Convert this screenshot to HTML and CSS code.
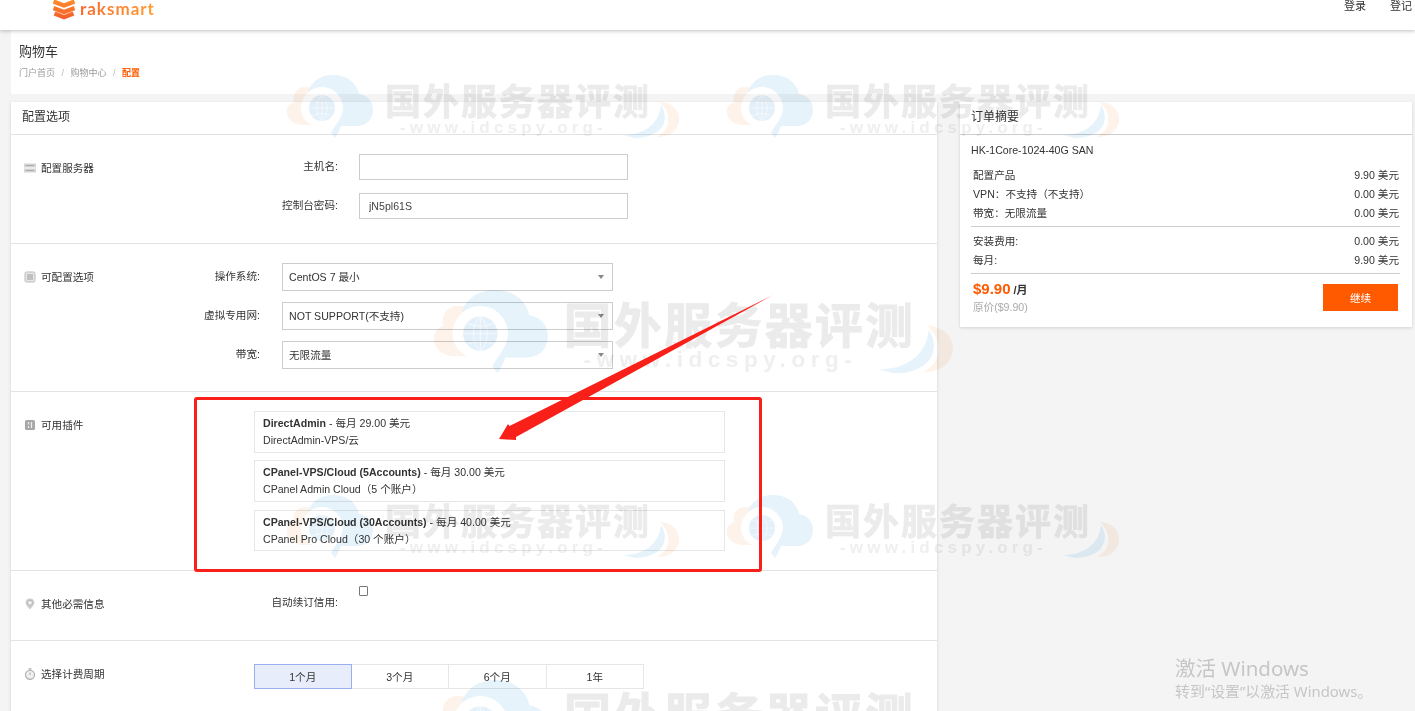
FILE: index.html
```html
<!DOCTYPE html>
<html>
<head>
  <title>购物车 - 配置</title>
  <link rel="stylesheet" href="styles.css">
</head>
<body>
  <svg class="defs" width="0" height="0">
    <symbol id="wm-art" viewBox="0 0 400 65" overflow="visible">
      <path class="wm-orange" d="M20 12C11 12 7 20 9 27C3 29 1 34 2 38C3 46 10 50 18 50H44L34 14C30 13 25 12 20 12Z"/>
      <path class="wm-blue" d="M50 63C53 58 55 54 56 51H72C82 51 88 44 88 35C88 26 82 20 74 19C72 8 62 0 48 0C36 0 27 6 23 16C30 30 40 50 50 63Z"/>
      <path class="wm-white" d="M37 12C25 12 16 22 16 33C16 41 21 47 27 50L46 58C50 50 58 42 58 33C58 22 49 12 37 12Z"/>
      <circle class="wm-globe" cx="37" cy="33" r="13"/>
      <path class="wm-grid" d="M24 33H50M37 20V46M27 25C33 28 41 28 47 25M27 41C33 38 41 38 47 41M37 20C30 26 30 40 37 46M37 20C44 26 44 40 37 46"/>
      <path class="wm-orange" d="M375 27C392 28 398 42 392 52C388 60 380 62 372 62C385 55 388 40 375 27Z"/>
      <path class="wm-blue" d="M338 60C358 60 374 50 376 30C386 46 376 63 350 63Z"/>
    </symbol>
    <symbol id="ic-server" viewBox="0 0 12 12">
      <path d="M0 1.5h12v4H0zM0 6.5h12v4H0z" fill="#d4d4d4"/>
      <path d="M2 3.5h8M2 8.5h8" stroke="#aaa" stroke-width="1"/>
    </symbol>
    <symbol id="ic-list" viewBox="0 0 12 12">
      <rect x="1" y="1" width="10" height="10" rx="1.5" fill="#e6e6e6" stroke="#bbb"/>
      <path d="M3 4h6M3 6h6M3 8h6" stroke="#999" stroke-width="1"/>
    </symbol>
    <symbol id="ic-plugin" viewBox="0 0 12 12">
      <rect x="1" y="1" width="10" height="10" rx="1.5" fill="#a8a8a8"/>
      <path d="M4.5 3v2.5M7.5 3v6M4.5 7v2" stroke="#eee" stroke-width="1.2"/>
    </symbol>
    <symbol id="ic-pin" viewBox="0 0 12 12">
      <path d="M6 0.5C3.2 0.5 1.6 2.5 1.6 4.8C1.6 7.4 4.5 9.5 6 11.5C7.5 9.5 10.4 7.4 10.4 4.8C10.4 2.5 8.8 0.5 6 0.5Z" fill="#ccc"/>
      <circle cx="6" cy="4.8" r="2.4" fill="#eee" stroke="#aaa" stroke-width="0.7"/>
    </symbol>
    <symbol id="ic-clock" viewBox="0 0 12 12">
      <circle cx="6" cy="6.8" r="4.5" fill="#f0f0f0" stroke="#b4b4b4" stroke-width="1.3"/>
      <path d="M4.5 0.8h3M6 0.8v1.5M6 4.5v2.5" stroke="#b4b4b4" stroke-width="1.2"/>
    </symbol>
    <linearGradient id="logo-grad" x1="0" y1="0" x2="0" y2="1">
      <stop offset="0" stop-color="#ff8a2c"/>
      <stop offset="1" stop-color="#f4602a"/>
    </linearGradient>
  </svg>

  <header class="topbar">
    <a class="logo">
      <svg class="logo-mark" viewBox="0 0 22 21" width="22" height="21">
        <path d="M0.5 2.5L11 6.5L21.5 2.5M0.5 9L11 13L21.5 9M1.5 14.5L11 18.2L20.5 14.5" fill="none" stroke="url(#logo-grad)" stroke-width="4.4"/>
      </svg>
      <span class="logo-text">raksmart</span>
    </a>
    <nav class="topnav">
      <a>登录</a>
      <a>登记</a>
    </nav>
  </header>

  <div class="page-head">
    <h1>购物车</h1>
    <div class="crumbs">
      <a>门户首页</a><i>/</i><a>购物中心</a><i>/</i><b>配置</b>
    </div>
  </div>

  <main class="content">
    <section class="card options">
      <h2 class="card-title">配置选项</h2>

      <div class="section sec-server">
        <div class="sec-title"><svg class="ic"><use href="#ic-server"/></svg>配置服务器</div>
        <div class="sec-body form-wide">
          <div class="form-row">
            <label class="form-label">主机名:</label>
            <input class="text-input" type="text">
          </div>
          <div class="form-row">
            <label class="form-label">控制台密码:</label>
            <input class="text-input" type="text" value="jN5pl61S">
          </div>
        </div>
      </div>

      <div class="section sec-config">
        <div class="sec-title"><svg class="ic"><use href="#ic-list"/></svg>可配置选项</div>
        <div class="sec-body form-narrow">
          <div class="form-row">
            <label class="form-label">操作系统:</label>
            <div class="select">CentOS 7 最小</div>
          </div>
          <div class="form-row">
            <label class="form-label">虚拟专用网:</label>
            <div class="select">NOT SUPPORT(不支持)</div>
          </div>
          <div class="form-row">
            <label class="form-label">带宽:</label>
            <div class="select">无限流量</div>
          </div>
        </div>
      </div>

      <div class="section sec-addons">
        <div class="sec-title"><svg class="ic"><use href="#ic-plugin"/></svg>可用插件</div>
        <div class="sec-body addons">
          <div class="addon"><div><b>DirectAdmin</b> - 每月 29.00 美元</div><div>DirectAdmin-VPS/云</div></div>
          <div class="addon"><div><b>CPanel-VPS/Cloud (5Accounts)</b> - 每月 30.00 美元</div><div>CPanel Admin Cloud（5 个账户）</div></div>
          <div class="addon addon-last"><div><b>CPanel-VPS/Cloud (30Accounts)</b> - 每月 40.00 美元</div><div>CPanel Pro Cloud（30 个账户）</div></div>
        </div>
      </div>

      <div class="section sec-other">
        <div class="sec-title"><svg class="ic"><use href="#ic-pin"/></svg>其他必需信息</div>
        <div class="sec-body form-wide">
          <div class="form-row form-check">
            <label class="form-label">自动续订信用:</label>
            <input class="check" type="checkbox">
          </div>
        </div>
      </div>

      <div class="section sec-cycle">
        <div class="sec-title"><svg class="ic"><use href="#ic-clock"/></svg>选择计费周期</div>
        <div class="sec-body tabs">
          <a class="tab active">1个月</a>
          <a class="tab">3个月</a>
          <a class="tab">6个月</a>
          <a class="tab">1年</a>
        </div>
      </div>
    </section>

    <aside class="card summary">
      <h2 class="card-title">订单摘要</h2>
      <div class="summary-body">
        <div class="product">HK-1Core-1024-40G SAN</div>
        <div class="rows">
          <div class="row"><span>配置产品</span><span>9.90 美元</span></div>
          <div class="row"><span>VPN：不支持（不支持）</span><span>0.00 美元</span></div>
          <div class="row"><span>带宽：无限流量</span><span>0.00 美元</span></div>
        </div>
        <div class="rows">
          <div class="row"><span>安装费用:</span><span>0.00 美元</span></div>
          <div class="row"><span>每月:</span><span>9.90 美元</span></div>
        </div>
        <div class="total">
          <div>
            <div><span class="price">$9.90</span> <span class="per">/月</span></div>
            <div class="orig">原价($9.90)</div>
          </div>
          <button class="btn">继续</button>
        </div>
      </div>
    </aside>
  </main>

  <!-- site watermark -->
  <svg class="wm wm-a" viewBox="0 0 400 65"><use href="#wm-art" width="400" height="65"/><text class="wm-title" x="100" y="40">国外服务器评测</text><text class="wm-sub" x="115" y="58">-www.idcspy.org-</text></svg>
  <svg class="wm wm-b" viewBox="0 0 400 65"><use href="#wm-art" width="400" height="65"/><text class="wm-title" x="100" y="40">国外服务器评测</text><text class="wm-sub" x="115" y="58">-www.idcspy.org-</text></svg>
  <svg class="wm wm-big wm-c" viewBox="0 0 400 65"><use href="#wm-art" width="400" height="65"/><text class="wm-title" x="100" y="40">国外服务器评测</text><text class="wm-sub" x="115" y="58">-www.idcspy.org-</text></svg>
  <svg class="wm wm-d" viewBox="0 0 400 65"><use href="#wm-art" width="400" height="65"/><text class="wm-title" x="100" y="40">国外服务器评测</text><text class="wm-sub" x="115" y="58">-www.idcspy.org-</text></svg>
  <svg class="wm wm-e" viewBox="0 0 400 65"><use href="#wm-art" width="400" height="65"/><text class="wm-title" x="100" y="40">国外服务器评测</text><text class="wm-sub" x="115" y="58">-www.idcspy.org-</text></svg>
  <svg class="wm wm-big wm-f" viewBox="0 0 400 65"><use href="#wm-art" width="400" height="65"/><text class="wm-title" x="100" y="40">国外服务器评测</text><text class="wm-sub" x="115" y="58">-www.idcspy.org-</text></svg>

  <!-- red annotation -->
  <div class="mark-box"></div>
  <svg class="mark-arrow" viewBox="0 0 1415 711">
    <polygon points="773,295 516,437 516,440 499,439 508,424 509.5,426" fill="#f9201a"/>
  </svg>

  <div class="activate">
    <div class="activate-big">激活 Windows</div>
    <div class="activate-small">转到“设置”以激活 Windows。</div>
  </div>
</body>
</html>
```

FILE: styles.css
```css
* {
  box-sizing: border-box;
}
html, body {
  height: 711px;
  overflow: hidden;
}
body {
  margin: 0;
  position: relative;
  background: #f4f4f4;
  color: #333;
  font-family: "Liberation Sans", "Noto Sans CJK SC", sans-serif;
  font-size: 10.6px;
}
.defs {
  position: absolute;
}

/* top bar */
.topbar {
  height: 30px;
  background: #fff;
  box-shadow: 0 1px 4px rgba(0,0,0,0.25);
  display: flex;
  justify-content: space-between;
  position: relative;
}
.logo {
  display: flex;
  align-items: flex-start;
  margin-left: 53px;
  gap: 5px;
}
.logo-mark {
  margin-top: -1px;
}
.logo-text {
  font-family: Lato, sans-serif;
  font-weight: 700;
  font-size: 17px;
  line-height: 18px;
  letter-spacing: 1px;
  background: linear-gradient(90deg, #fb6a2c, #ff9d34);
  -webkit-background-clip: text;
  background-clip: text;
  color: transparent;
}
.topnav {
  display: flex;
  gap: 24px;
  padding-right: 3px;
  font-size: 11px;
  line-height: 13px;
}

.page-head {
  margin-left: 11px;
  height: 64px;
  padding: 14px 8px 0;
  background: #fff;
}
.page-head h1 {
  margin: 0 0 7px;
  font-size: 13px;
  font-weight: normal;
  line-height: 16px;
}
.crumbs {
  font-size: 9px;
  line-height: 12px;
  color: #999;
}
.crumbs i {
  font-style: normal;
  margin: 0 6.5px;
  color: #bbb;
}
.crumbs b {
  color: #ff5a00;
}

/* main columns */
.content {
  display: flex;
  align-items: flex-start;
  gap: 23px;
  margin: 8px 0 0 11px;
}
.card {
  background: #fff;
  box-shadow: 0 1px 3px rgba(0,0,0,0.15);
}
.card-title {
  margin: 0;
  height: 33px;
  padding: 0 11px;
  border-bottom: 1px solid #e3e3e3;
  font-size: 12px;
  font-weight: normal;
  line-height: 30px;
}
.options {
  width: 926px;
  flex: none;
}
.summary {
  width: 452px;
  flex: none;
}
.summary .card-title {
  border-bottom-color: #ccc;
}

/* sections of the left card */
.section {
  display: flex;
  border-bottom: 1px solid #e3e3e3;
}
.sec-server { height: 109px; padding-top: 19px; }
.sec-config { height: 148px; padding-top: 19px; }
.sec-addons { height: 179px; padding-top: 19px; }
.sec-other { height: 70px; padding-top: 15px; }
.sec-cycle { height: 120px; padding-top: 23px; border-bottom: 0; }

.sec-title {
  width: 180px;
  flex: none;
  height: 16px;
  margin-top: 6px;
  padding-left: 13px;
  display: flex;
  align-items: center;
  gap: 5px;
  line-height: 16px;
}
.sec-other .sec-title { margin-top: 10px; }
.sec-cycle .sec-title { margin-top: 2px; }
.ic {
  width: 12px;
  height: 12px;
  flex: none;
}

.form-row {
  display: flex;
  align-items: center;
}
.form-label {
  text-align: right;
  padding-bottom: 4px;
}
.form-wide .form-label {
  width: 147px;
  margin-right: 21px;
}
.form-narrow .form-label {
  width: 69px;
  margin-right: 22px;
}
.form-wide .form-row + .form-row {
  margin-top: 13px;
}
.form-narrow .form-row + .form-row {
  margin-top: 11px;
}
.text-input {
  width: 269px;
  height: 26px;
  padding: 0 9px;
  border: 1px solid #ccc;
  border-radius: 0;
  background: transparent;
  color: #444;
  font: 10.6px "Liberation Sans", sans-serif;
}
.select {
  width: 331px;
  height: 28px;
  padding: 0 6px;
  border: 1px solid #ccc;
  line-height: 27px;
  position: relative;
}
.select::after {
  content: "";
  position: absolute;
  right: 8px;
  top: 11px;
  border: 3px solid transparent;
  border-top: 4px solid #888;
  border-bottom: 0;
}

.form-check {
  align-items: flex-start;
}
.form-check .form-label {
  margin-top: 8px;
  padding-bottom: 0;
  line-height: 16px;
}
.check {
  width: 9px;
  height: 10px;
  margin: 0;
  appearance: none;
  border: 1px solid #777;
  border-radius: 1px;
  background: #fff;
}

.addons {
  margin-left: 63px;
}
.addon {
  width: 471px;
  height: 42px;
  margin-bottom: 7px;
  padding: 3px 8px;
  border: 1px solid #e6e6e6;
  line-height: 17px;
}
.addon + .addon {
  margin-bottom: 8px;
}
.addon-last {
  height: 41px;
}

.tabs {
  display: flex;
  margin-left: 63px;
}
.tab {
  width: 97.5px;
  height: 25px;
  border: 1px solid #e6e6e6;
  border-left: 0;
  text-align: center;
  line-height: 24px;
}
.tab.active {
  border: 1px solid #9aaef0;
  background: #e8edfb;
}

/* order summary */
.summary-body {
  padding: 7px 12px 13px 11px;
}
.product {
  height: 23px;
  line-height: 17px;
}
.rows {
  padding: 1px 1px 3px 2px;
  border-bottom: 1px solid #ccc;
  margin-bottom: 4px;
}
.row {
  display: flex;
  justify-content: space-between;
  height: 19px;
  line-height: 19px;
}
.total {
  display: flex;
  justify-content: space-between;
  padding: 2px 2px 0;
}
.price {
  color: #ff5a00;
  font-size: 15px;
  font-weight: bold;
  line-height: 18px;
}
.per {
  font-size: 11px;
  font-weight: bold;
}
.orig {
  color: #aaa;
  margin-top: 1px;
}
.btn {
  width: 75px;
  height: 27px;
  margin-top: 4px;
  border: 0;
  background: #ff5a00;
  color: #fff;
  font: 10.6px "Liberation Sans", "Noto Sans CJK SC", sans-serif;
}

/* watermarks */
.wm {
  position: absolute;
  width: 400px;
  height: 65px;
  overflow: visible;
  pointer-events: none;
  mix-blend-mode: multiply;
}
.wm-big {
  width: 532px;
  height: 86px;
}
.wm-a { left: 285px; top: 75px; }
.wm-b { left: 725px; top: 75px; }
.wm-c { left: 430px; top: 290px; }
.wm-d { left: 285px; top: 495px; }
.wm-e { left: 725px; top: 495px; }
.wm-f { left: 430px; top: 680px; }
.wm-title {
  font-family: "Noto Sans CJK SC", sans-serif;
  font-size: 36px;
  font-weight: bold;
  letter-spacing: 2px;
  fill: #ebebeb;
  stroke: #ebebeb;
  stroke-width: 0.7px;
}
.wm-sub {
  font-family: "Liberation Sans", sans-serif;
  font-size: 17px;
  font-weight: bold;
  letter-spacing: 4.2px;
  fill: #efefef;
}
.wm-orange { fill: #fdf3ea; }
.wm-blue { fill: #e6f3fb; }
.wm-white { fill: #fff; }
.wm-globe { fill: #e4f0f9; }
.wm-grid { fill: none; stroke: #f6fafd; stroke-width: 0.7; }

/* red annotation over the addons */
.mark-box {
  position: absolute;
  left: 194px;
  top: 397px;
  width: 568px;
  height: 175px;
  border: 3px solid #f9201a;
  border-radius: 3px;
}
.mark-arrow {
  position: absolute;
  left: 0;
  top: 0;
  width: 1415px;
  height: 711px;
  pointer-events: none;
}

.activate {
  position: absolute;
  left: 1175px;
  top: 655px;
  color: #c6c6c6;
  font-family: "Noto Sans", "Noto Sans CJK SC", sans-serif;
  line-height: 20px;
}
.activate-big {
  font-size: 20.5px;
  line-height: 26px;
}
.activate-small {
  font-size: 14.9px;
}
```
